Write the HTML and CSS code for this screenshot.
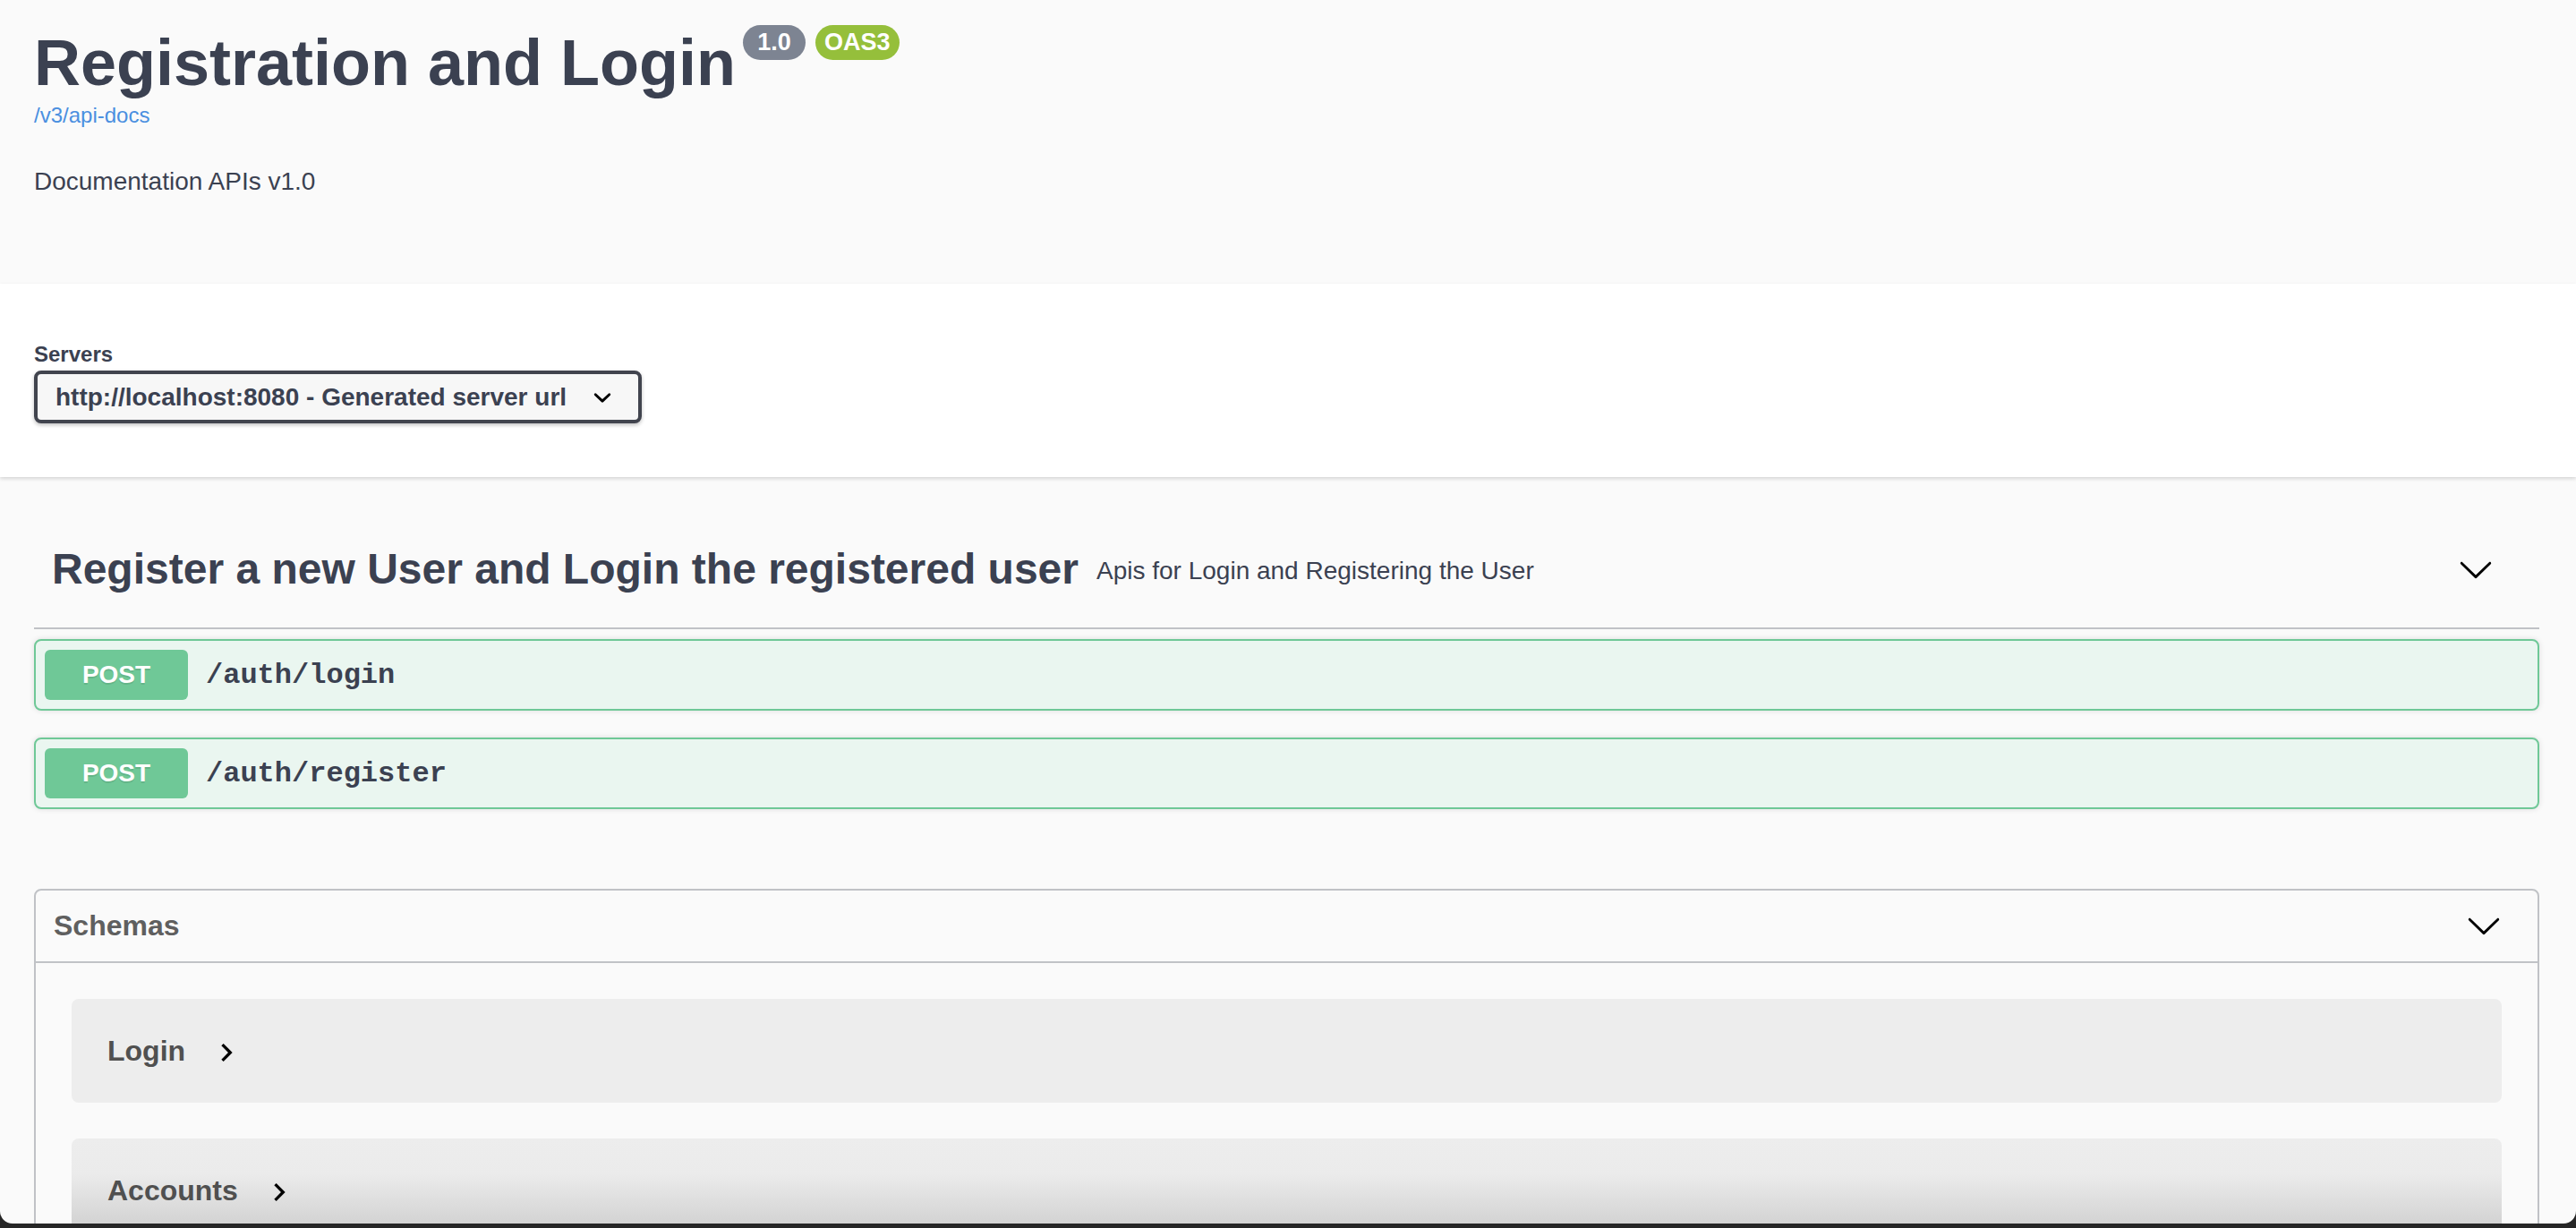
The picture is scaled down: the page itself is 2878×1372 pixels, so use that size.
FILE: index.html
```html
<!DOCTYPE html>
<html lang="en">
<head>
<meta charset="utf-8">
<title>Swagger UI</title>
<link rel="stylesheet" href="styles.css">
</head>
<body>
<div class="page">
  <section class="info wrapper">
    <h2 class="title">
      <span class="title-text">Registration and Login</span>
      <span class="badges"><span class="badge">1.0</span><span class="badge oas">OAS3</span></span>
    </h2>
    <a class="url" href="#">/v3/api-docs</a>
    <div class="description"><p>Documentation APIs v1.0</p></div>
  </section>

  <section class="scheme">
    <div class="wrapper">
      <div class="servers-title">Servers</div>
      <div class="select">
        <span>http://localhost:8080 - Generated server url</span>
        <svg class="select-arrow" viewBox="0 0 20 20" width="40" height="40" aria-hidden="true"><path d="M13.418 7.859a.695.695 0 0 1 .978 0 .68.68 0 0 1 0 .969l-3.908 3.83a.697.697 0 0 1-.979 0l-3.908-3.830a.68.68 0 0 1 0-.969.695.695 0 0 1 .978 0L10 11l3.418-3.141z"/></svg>
      </div>
    </div>
  </section>

  <div class="wrapper">
    <section class="tag-section">
      <h3 class="tag">
        <span class="tag-name">Register a new User and Login the registered user</span>
        <small class="tag-desc"><p>Apis for Login and Registering the User</p></small>
        <span class="expand"><svg viewBox="0 0 20 20" width="40" height="40" aria-hidden="true"><path d="M17.418 6.109c.272-.268.709-.268.979 0s.271.701 0 .969l-7.908 7.83c-.27.268-.707.268-.979 0l-7.908-7.830c-.27-.268-.27-.701 0-.969.271-.268.709-.268.979 0L10 13.25l7.418-7.141z"/></svg></span>
      </h3>
      <div class="ops">
        <div class="opblock">
          <span class="method">POST</span>
          <span class="path">/auth/login</span>
        </div>
        <div class="opblock">
          <span class="method">POST</span>
          <span class="path">/auth/register</span>
        </div>
      </div>
    </section>

    <section class="models">
      <h4 class="models-head">
        <span>Schemas</span>
        <svg viewBox="0 0 20 20" width="40" height="40" aria-hidden="true"><path d="M17.418 6.109c.272-.268.709-.268.979 0s.271.701 0 .969l-7.908 7.83c-.27.268-.707.268-.979 0l-7.908-7.830c-.27-.268-.27-.701 0-.969.271-.268.709-.268.979 0L10 13.25l7.418-7.141z"/></svg>
      </h4>
      <div class="model-list">
        <div class="model">
          <span class="model-title">Login</span>
          <svg class="toggle" viewBox="0 0 24 24" width="40" height="40" aria-hidden="true"><path d="M10 6 8.59 7.41 13.17 12l-4.58 4.59L10 18l6-6z"/></svg>
        </div>
        <div class="model shaded">
          <span class="model-title">Accounts</span>
          <svg class="toggle" viewBox="0 0 24 24" width="40" height="40" aria-hidden="true"><path d="M10 6 8.59 7.41 13.17 12l-4.58 4.59L10 18l6-6z"/></svg>
        </div>
      </div>
    </section>
  </div>
</div>
</body>
</html>
```

FILE: styles.css
```css
html {
  background: #262626;
}

body {
  margin: 0;
  height: 1367px;
  overflow: hidden;
  background: #fafafa;
  border-radius: 0 0 14px 14px;
  font-family: "Liberation Sans", Arial, sans-serif;
  color: #3b4151;
}

.wrapper {
  padding: 0 41px 0 38px;
}

/* ---------- info ---------- */
.info {
  padding-top: 27px;
  padding-bottom: 94px;
}

.title {
  display: flex;
  align-items: flex-start;
  margin: 0;
  font-size: 72px;
  line-height: 86px;
  font-weight: 700;
  color: #3b4151;
}

.badges {
  display: flex;
  gap: 11px;
  margin-left: 8px;
  margin-top: 1px;
}

.badge {
  box-sizing: border-box;
  min-width: 70px;
  height: 39px;
  padding: 0 10px;
  border-radius: 114px;
  background: #7d8492;
  color: #fff;
  font-size: 27px;
  line-height: 39px;
  font-weight: 700;
  text-align: center;
}

.badge.oas {
  background: #95bf3b;
}

.url {
  display: block;
  font-size: 24px;
  line-height: 32px;
  color: #4a8fe0;
  text-decoration: none;
}

.description p {
  margin: 38px 0 0;
  font-size: 28px;
  line-height: 40px;
}

/* ---------- servers ---------- */
.scheme {
  background: #fff;
  box-shadow: 0 2px 4px 0 rgba(0, 0, 0, 0.15);
  padding: 64px 0 60px;
}

.servers-title {
  font-size: 24px;
  line-height: 30px;
  font-weight: 700;
  margin-bottom: 3px;
}

.select {
  box-sizing: border-box;
  width: 679px;
  height: 59px;
  display: flex;
  align-items: center;
  justify-content: space-between;
  padding: 0 20px;
  border: 4px solid #41444e;
  border-radius: 8px;
  background: #f7f7f7;
  box-shadow: 0 2px 4px 0 rgba(0, 0, 0, 0.25);
  font-size: 28px;
  line-height: 31px;
  font-weight: 700;
  color: #3b4151;
}

.select-arrow {
  flex: none;
}

/* ---------- tag section ---------- */
.tag-section {
  margin-top: 36px;
}

.tag {
  display: flex;
  align-items: center;
  margin: 0;
  padding: 20px 40px 19px 20px;
  border-bottom: 2px solid rgba(59, 65, 81, 0.3);
  font-size: 48px;
  font-weight: 700;
  color: #3b4151;
}

.tag-name {
  line-height: 55px;
}

.tag-desc {
  flex: 1;
  padding: 0 20px;
  font-size: 28px;
  font-weight: 400;
}

.tag-desc p {
  margin: 28px 0;
  line-height: 37px;
  position: relative;
  top: 2px;
}

.expand {
  display: flex;
  padding: 0 11px 0 12px;
}

.ops {
  display: flex;
  flex-direction: column;
  gap: 30px;
  margin-top: 11px;
}

.opblock {
  display: flex;
  align-items: center;
  padding: 10px;
  border: 2px solid #6fc897;
  border-radius: 8px;
  background: #eaf6f0;
  box-shadow: 0 0 6px rgba(0, 0, 0, 0.12);
}

.method {
  min-width: 160px;
  padding: 12px 0;
  border-radius: 6px;
  background: #6fc897;
  color: #fff;
  font-size: 28px;
  line-height: 32px;
  font-weight: 700;
  text-align: center;
  text-shadow: 0 2px 0 rgba(0, 0, 0, 0.1);
}

.path {
  padding: 0 20px;
  font-family: "Liberation Mono", "Courier New", monospace;
  font-size: 32px;
  font-weight: 700;
  color: #3b4151;
}

/* ---------- models ---------- */
.models {
  margin-top: 89px;
  border: 2px solid rgba(59, 65, 81, 0.3);
  border-radius: 8px;
  padding-bottom: 40px;
}

.models-head {
  display: flex;
  align-items: center;
  justify-content: space-between;
  margin: 0;
  padding: 19px 40px 20px 20px;
  border-bottom: 2px solid rgba(59, 65, 81, 0.3);
  font-size: 32px;
  line-height: 37px;
  font-weight: 700;
  color: #5f5f5f;
}

.model-list {
  display: flex;
  flex-direction: column;
  gap: 40px;
  padding: 40px 40px 0;
}

.model {
  display: flex;
  align-items: center;
  height: 116px;
  padding: 0 40px;
  border-radius: 8px;
  background: #ededed;
}

.model.shaded {
  background: linear-gradient(to bottom, #ededed 0, #ebebeb 40px, #d4d4d4 93px, #d4d4d4 100%);
}

.model-title {
  font-size: 32px;
  line-height: 37px;
  font-weight: 700;
  color: #505050;
}

.toggle {
  margin-left: 26px;
  margin-top: 3px;
}
```
